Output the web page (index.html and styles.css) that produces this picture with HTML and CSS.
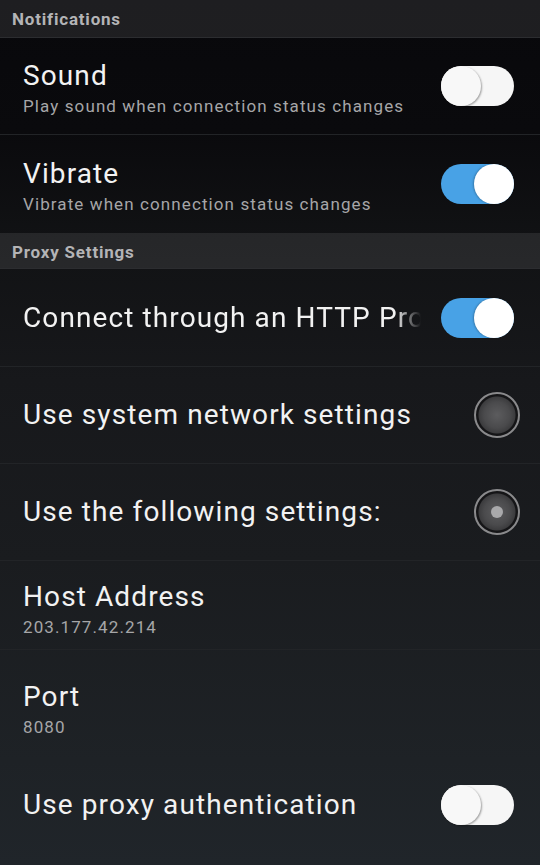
FILE: index.html
```html
<!DOCTYPE html>
<html lang="en">
<head>
    <meta charset="UTF-8">
    <meta name="viewport" content="width=device-width, initial-scale=1.0">
    <title>Settings</title>
    <link rel="stylesheet" href="styles.css">
</head>
<body>

    <div class="screen">
        <!-- Notifications -->
        <div class="category first">Notifications</div>

        <div class="pref pref-sound">
            <div class="pref-text">
                <div class="pref-title">Sound</div>
                <div class="pref-summary">Play sound when connection status changes</div>
            </div>
            <div class="switch"><span class="knob"></span></div>
        </div>

        <div class="pref pref-vibrate">
            <div class="pref-text">
                <div class="pref-title">Vibrate</div>
                <div class="pref-summary">Vibrate when connection status changes</div>
            </div>
            <div class="switch on"><span class="knob"></span></div>
        </div>

        <!-- Proxy Settings -->
        <div class="category">Proxy Settings</div>

        <div class="pref pref-connect">
            <div class="pref-text">
                <div class="pref-title clipped">Connect through an HTTP Proxy</div>
            </div>
            <div class="switch on"><span class="knob"></span></div>
        </div>

        <div class="pref pref-radio">
            <div class="pref-text">
                <div class="pref-title">Use system network settings</div>
            </div>
            <div class="radio"></div>
        </div>

        <div class="pref pref-radio">
            <div class="pref-text">
                <div class="pref-title">Use the following settings:</div>
            </div>
            <div class="radio checked"></div>
        </div>

        <div class="pref pref-host">
            <div class="pref-text">
                <div class="pref-title">Host Address</div>
                <div class="pref-summary">203.177.42.214</div>
            </div>
        </div>

        <div class="pref pref-port">
            <div class="pref-text">
                <div class="pref-title">Port</div>
                <div class="pref-summary">8080</div>
            </div>
        </div>

        <div class="pref pref-auth">
            <div class="pref-text">
                <div class="pref-title">Use proxy authentication</div>
            </div>
            <div class="switch"><span class="knob"></span></div>
        </div>
    </div>

</body>
</html>
```

FILE: styles.css
```css
body {
    margin: 0;
    padding: 0;
    background: #08080b;
    font-family: Roboto, "Noto Sans", Arial, sans-serif;
}
.screen {
    width: 540px;
    height: 865px;
    overflow: hidden;
    background: linear-gradient(180deg, #08080b 0px, #0a0a0d 130px, #111214 240px, #17181b 380px, #1a1c1f 560px, #1e2226 760px, #20252a 865px);
}
.category {
    height: 36px;
    line-height: 38px;
    padding-left: 12px;
    font-size: 17px;
    font-weight: bold;
    letter-spacing: 0.8px;
    color: #b4b4b6;
    background: rgba(255, 255, 255, 0.09);
    border-bottom: 1px solid #2c2d30;
    box-sizing: border-box;
}
.category.first {
    height: 38px;
    line-height: 39px;
}
.pref {
    display: flex;
    align-items: center;
    padding: 0 26px 0 23px;
    box-sizing: border-box;
    border-bottom: 1px solid #222427;
}
.pref-sound { height: 97px; padding-top: 4px; }
.pref-vibrate { height: 98px; padding-top: 4px; border-bottom: none; }
.pref-sound .switch,
.pref-vibrate .switch { margin-top: -4px; }
.pref-connect { height: 98px; }
.pref-radio { height: 97px; padding-right: 20px; }
.pref-host { height: 89px; padding-top: 8px; }
.pref-port { height: 104px; padding-top: 14px; border-bottom: none; }
.pref-auth { height: 102px; border-bottom: none; }

.pref-text {
    flex: 1;
    min-width: 0;
}
.pref-title {
    font-size: 28px;
    line-height: 34px;
    letter-spacing: 1.1px;
    color: #f2f2f2;
    white-space: nowrap;
}
.clipped {
    overflow: hidden;
    -webkit-mask-image: linear-gradient(90deg, #000 372px, transparent 398px);
    mask-image: linear-gradient(90deg, #000 372px, transparent 398px);
}
.pref-summary {
    font-size: 17px;
    line-height: 22px;
    letter-spacing: 1.1px;
    color: #a6a6a8;
    margin-top: 2px;
}

/* toggles */
.switch {
    width: 73px;
    height: 40px;
    margin-left: 18px;
    border-radius: 20px;
    background: #f6f6f6;
    position: relative;
    flex-shrink: 0;
}
.switch .knob {
    position: absolute;
    top: 0;
    left: 0;
    width: 40px;
    height: 40px;
    border-radius: 50%;
    background: #f8f8f8;
    box-shadow: 1px 1px 2px rgba(0, 0, 0, 0.35);
}
.switch.on {
    background: #48a2e6;
}
.switch.on .knob {
    left: auto;
    right: 0;
    background: #ffffff;
    box-shadow: -1px 0 2px rgba(0, 0, 0, 0.25);
}

/* radio buttons */
.radio {
    width: 46px;
    height: 46px;
    border-radius: 50%;
    box-sizing: border-box;
    border: 2px solid #8a8a8c;
    background: radial-gradient(circle, #5c5c5e 0, #4a4a4c 13px, #3c3c3e 18px, #151517 19px);
    position: relative;
    flex-shrink: 0;
}
.radio.checked::after {
    content: "";
    position: absolute;
    top: 15px;
    left: 15px;
    width: 12px;
    height: 12px;
    border-radius: 50%;
    background: #a9a9ab;
}
```
